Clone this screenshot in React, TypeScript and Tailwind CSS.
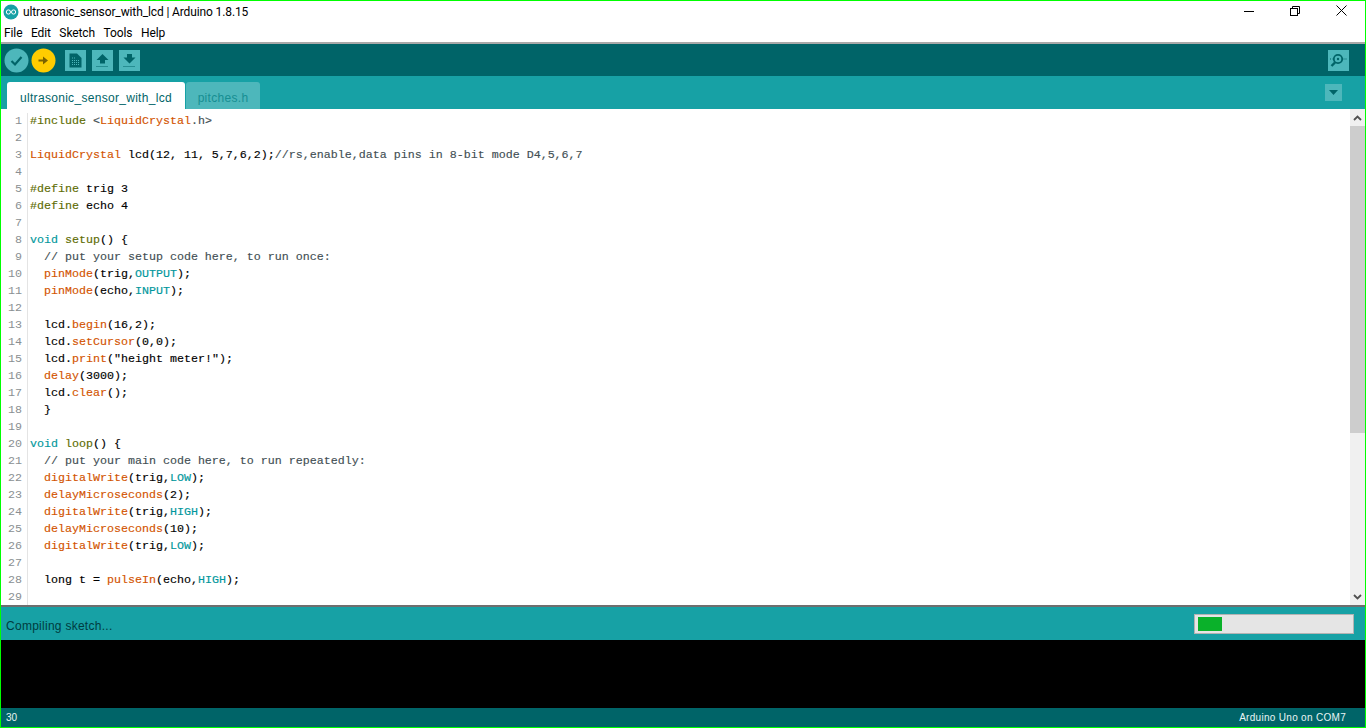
const ui = "font-['Roboto','Liberation_Sans',sans-serif]";
const arial = "font-['Liberation_Sans',Arial,sans-serif]";

// token colours used by the sketch listing
const fn = "text-[#d35400]";
const ct = "text-[#00979c]";
const ol = "text-[#5e6d03]";
const cm = "text-[#434f54]";

type Token = [string, string?];

const code: Token[][] = [
  [["#include", ol], [" <", cm], ["LiquidCrystal", fn], [".h>", cm]],
  [],
  [["LiquidCrystal", fn], [" lcd(12, 11, 5,7,6,2);"], ["//rs,enable,data pins in 8-bit mode D4,5,6,7", cm]],
  [],
  [["#define", ol], [" trig 3"]],
  [["#define", ol], [" echo 4"]],
  [],
  [["void", ct], [" "], ["setup", ol], ["() {"]],
  [["  // put your setup code here, to run once:", cm]],
  [["  "], ["pinMode", fn], ["(trig,"], ["OUTPUT", ct], [");"]],
  [["  "], ["pinMode", fn], ["(echo,"], ["INPUT", ct], [");"]],
  [],
  [["  lcd."], ["begin", fn], ["(16,2);"]],
  [["  lcd."], ["setCursor", fn], ["(0,0);"]],
  [["  lcd."], ["print", fn], ['("height meter!");']],
  [["  "], ["delay", fn], ["(3000);"]],
  [["  lcd."], ["clear", fn], ["();"]],
  [["  }"]],
  [],
  [["void", ct], [" "], ["loop", ol], ["() {"]],
  [["  // put your main code here, to run repeatedly:", cm]],
  [["  "], ["digitalWrite", fn], ["(trig,"], ["LOW", ct], [");"]],
  [["  "], ["delayMicroseconds", fn], ["(2);"]],
  [["  "], ["digitalWrite", fn], ["(trig,"], ["HIGH", ct], [");"]],
  [["  "], ["delayMicroseconds", fn], ["(10);"]],
  [["  "], ["digitalWrite", fn], ["(trig,"], ["LOW", ct], [");"]],
  [],
  [["  long t = "], ["pulseIn", fn], ["(echo,"], ["HIGH", ct], [");"]],
  [],
];

function ToolButton({ children }: { children: React.ReactNode }) {
  return <div className="flex h-[21px] w-[21px] items-center justify-center bg-[#4db7bb]">{children}</div>;
}

export default function App() {
  return (
    <div className={`flex h-[728px] w-[1366px] flex-col overflow-hidden border border-[#00ff00] bg-white ${ui}`}>
      {/* title bar */}
      <div className="flex h-[22px] shrink-0 items-center">
        <svg width="16" height="16" viewBox="0 0 16 16" className="ml-[2px]">
          <circle cx="8" cy="8" r="7.5" fill="#17a1a5" />
          <circle cx="5.4" cy="8" r="2.1" fill="none" stroke="#fff" strokeWidth="1" />
          <circle cx="10.6" cy="8" r="2.1" fill="none" stroke="#fff" strokeWidth="1" />
        </svg>
        <span className="ml-[4px] text-[12px] tracking-[-0.12px] text-black">ultrasonic_sensor_with_lcd | Arduino 1.8.15</span>
        <div className="mb-[3px] ml-auto flex pr-px">
          <div className="flex h-[19px] w-[46px] items-center justify-center">
            <svg width="10" height="10" viewBox="0 0 10 10"><path d="M0 5.5H10" stroke="#000" /></svg>
          </div>
          <div className="flex h-[19px] w-[46px] items-center justify-center">
            <svg width="10" height="10" viewBox="0 0 10 10" fill="none" stroke="#000">
              <rect x="0.5" y="2.5" width="7" height="7" />
              <path d="M2.5 2.5V0.5H9.5V7.5H7.5" />
            </svg>
          </div>
          <div className="flex h-[19px] w-[46px] items-center justify-center">
            <svg width="11" height="11" viewBox="0 0 11 11"><path d="M0.5 0.5L10.5 10.5M10.5 0.5L0.5 10.5" stroke="#000" /></svg>
          </div>
        </div>
      </div>

      {/* menu bar */}
      <div className="flex h-[21px] shrink-0 items-center gap-[8.5px] border-b-2 border-[#a9a9a9] pl-[3px] text-[12px] tracking-[-0.1px] text-black">
        <span>File</span>
        <span>Edit</span>
        <span>Sketch</span>
        <span>Tools</span>
        <span>Help</span>
      </div>

      {/* toolbar */}
      <div className="flex h-[32px] shrink-0 items-center bg-[#006468] pl-[3px] pr-[16px]">
        <svg width="25" height="25" viewBox="0 0 25 25">
          <circle cx="12.5" cy="12.5" r="12" fill="#4db7bb" />
          <path d="M7.5 13L11 16.5L17.5 9" fill="none" stroke="#006468" strokeWidth="2.2" />
        </svg>
        <svg width="25" height="25" viewBox="0 0 25 25" className="ml-[2px]">
          <circle cx="12.5" cy="12.5" r="12" fill="#ffcc00" />
          <path d="M7.5 11.5H12V8.5L17 12.5L12 16.5V13.5H7.5Z" fill="#7a6200" />
        </svg>
        <div className="ml-[9px] flex gap-[6px]">
          <ToolButton>
            <svg width="13" height="15" viewBox="0 0 13 15">
              <path d="M0.5 0.5H8L12.5 5V14.5H0.5Z" fill="#006468" />
              <path d="M3 5H7M3 7.5H10.5M3 9.5H10.5M3 11.5H10.5" stroke="#4db7bb" strokeDasharray="1 1" />
            </svg>
          </ToolButton>
          <ToolButton>
            <svg width="13" height="15" viewBox="0 0 13 15">
              <path d="M6.5 1L12.5 7H9V10.5H4V7H0.5Z" fill="#006468" />
              <path d="M0.5 13.5H12.5" stroke="#006468" strokeDasharray="1 1" />
            </svg>
          </ToolButton>
          <ToolButton>
            <svg width="13" height="15" viewBox="0 0 13 15">
              <path d="M6.5 10.5L12.5 4.5H9V1H4V4.5H0.5Z" fill="#006468" />
              <path d="M0.5 13.5H12.5" stroke="#006468" strokeDasharray="1 1" />
            </svg>
          </ToolButton>
        </div>
        <div className="ml-auto">
          <ToolButton>
            <svg width="17" height="15" viewBox="0 0 17 15" fill="none">
              <circle cx="8" cy="6" r="4.2" stroke="#006468" strokeWidth="1.8" />
              <circle cx="8" cy="6" r="1.2" fill="#006468" />
              <path d="M5 9.5L1.5 13" stroke="#006468" strokeWidth="2.4" />
              <path d="M13.5 6H17" stroke="#006468" strokeDasharray="1 1" />
              <path d="M0 6H2.5" stroke="#006468" strokeDasharray="1 1" />
            </svg>
          </ToolButton>
        </div>
      </div>

      {/* tabs */}
      <div className={`flex h-[33px] shrink-0 items-end bg-[#17a1a5] pl-[6px] pr-[23px] text-[12px] tracking-[0.3px] ${arial}`}>
        <div className="flex h-[27px] w-[178px] items-center justify-center rounded-t-[3px] bg-white pt-[4px] text-[#006468]">
          ultrasonic_sensor_with_lcd
        </div>
        <div className="ml-px flex h-[27px] w-[74px] items-center justify-center rounded-t-[3px] bg-[#4db7bb] pt-[4px] text-[#168e92]">
          pitches.h
        </div>
        <div className="mb-[8px] ml-auto flex h-[17px] w-[17px] items-center justify-center bg-[#4db7bb]">
          <svg width="9" height="5" viewBox="0 0 9 5"><path d="M0 0H9L4.5 5Z" fill="#006468" /></svg>
        </div>
      </div>

      {/* editor */}
      <div className="flex min-h-0 flex-1 border-b-2 border-[#6e6e6e]">
        <div className="flex-1 overflow-hidden pt-[4px] font-['Liberation_Mono',monospace] text-[11.666px] leading-[17px] text-black [-webkit-text-stroke:0.15px]">
          {code.map((line, i) => (
            <div key={i} className="flex h-[17px]">
              <div className="w-[27px] shrink-0 border-r border-[#e4e4e4] pr-[5px] text-right text-[#8a8f92] [-webkit-text-stroke:0px]">{i + 1}</div>
              <pre className="ml-[2px] font-['Liberation_Mono',monospace]">
                {line.map((t, j) => (
                  <span key={j} className={t[1]}>{t[0]}</span>
                ))}
              </pre>
            </div>
          ))}
        </div>
        {/* scrollbar */}
        <div className="flex w-[15px] shrink-0 flex-col bg-[#f0f0f0]">
          <div className="flex h-[17px] items-center justify-center">
            <svg width="9" height="6" viewBox="0 0 9 6"><path d="M1 5L4.5 1.5L8 5" fill="none" stroke="#505050" strokeWidth="1.8" /></svg>
          </div>
          <div className="h-[307px] bg-[#cdcdcd]" />
          <div className="mt-auto flex h-[17px] items-center justify-center">
            <svg width="9" height="6" viewBox="0 0 9 6"><path d="M1 1L4.5 4.5L8 1" fill="none" stroke="#505050" strokeWidth="1.8" /></svg>
          </div>
        </div>
      </div>

      {/* status */}
      <div className={`flex h-[33px] shrink-0 items-center justify-between bg-[#17a1a5] pl-[5px] pr-[11px] ${arial}`}>
        <span className="pt-[5px] text-[12px] tracking-[0.27px] text-[#003c40]">Compiling sketch...</span>
        <div className="flex h-[20px] w-[160px] items-center border border-[#b3b3b3] bg-[#e5e5e5] pl-[3px]">
          <div className="h-[14px] w-[24px] bg-[#0ab12a]" />
        </div>
      </div>

      {/* console */}
      <div className="h-[68px] shrink-0 bg-black" />

      {/* footer */}
      <div className={`flex h-[19px] shrink-0 items-center justify-between bg-[#006468] pl-[5px] pr-[19px] text-[10px] text-[#e8f4f4] ${arial}`}>
        <span>30</span>
        <span className="tracking-[0.3px]">Arduino Uno on COM7</span>
      </div>
    </div>
  );
}
